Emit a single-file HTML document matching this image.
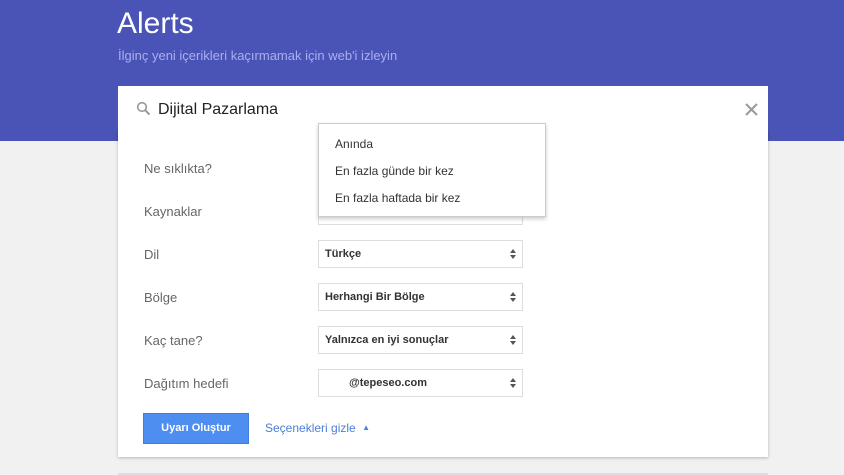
<!DOCTYPE html>
<html><head><meta charset="utf-8"><style>
body{margin:0;width:844px;height:475px;background:#f1f1f1;font-family:"Liberation Sans",Arial,sans-serif;position:relative;overflow:hidden}
.hdr{position:absolute;left:0;top:0;width:844px;height:141px;background:#4a53b6}
.t{position:absolute;left:117px;top:7px;font-size:30px;color:#fff;font-weight:300}
.st{position:absolute;left:118px;top:48px;font-size:13px;color:#a9b0ec}
.sb{position:absolute;left:118px;top:86px;width:650px;height:44px;background:#fff}
.sb .q{position:absolute;left:40px;top:15px;font-size:16px;color:#222}
.card{position:absolute;left:118px;top:130px;width:650px;height:327px;background:#fff;box-shadow:0 1px 3px rgba(0,0,0,.25)}
.lbl{position:absolute;left:144px;font-size:13px;color:#666}
.sel{position:absolute;left:318px;width:205px;height:28px;border:1px solid #ddd;background:#fff;font-size:11px;font-weight:bold;color:#333;box-sizing:border-box}
.sel span{position:absolute;left:6px;top:7px}
.sel i{position:absolute;right:6px;top:8px;width:0;height:0;border-left:3.5px solid transparent;border-right:3.5px solid transparent;border-bottom:4px solid #555}
.sel b{position:absolute;right:6px;top:14px;width:0;height:0;border-left:3.5px solid transparent;border-right:3.5px solid transparent;border-top:4px solid #555}
.dd{position:absolute;left:318px;top:123px;width:228px;height:94px;background:#fff;border:1px solid #ccc;box-shadow:0 2px 4px rgba(0,0,0,.2);box-sizing:border-box}
.dd div{position:absolute;left:16px;font-size:12px;color:#333}
.btn{position:absolute;left:143px;top:413px;width:106px;height:31px;background:#4d8ef0;border:1px solid #3f7ed8;box-sizing:border-box;color:#fff;font-size:11px;font-weight:bold;text-align:center;line-height:29px}
.lnk{position:absolute;left:265px;top:421px;font-size:12px;color:#4a7fd8}
</style></head><body>
<div class="hdr"></div>
<div class="t">Alerts</div>
<div class="st">İlginç yeni içerikleri kaçırmamak için web'i izleyin</div>
<div class="card"></div>
<div class="sb">
<svg style="position:absolute;left:18px;top:15px" width="15" height="15" viewBox="0 0 15 15"><circle cx="6" cy="6" r="4.3" fill="none" stroke="#999" stroke-width="1.6"/><path d="M9.2 9.2L13.5 13.5" stroke="#999" stroke-width="2"/></svg>
<div class="q">Dijital Pazarlama</div>
<svg style="position:absolute;left:627px;top:17px" width="13" height="13" viewBox="0 0 13 13"><path d="M1 1L12 12M12 1L1 12" stroke="#999" stroke-width="2"/></svg>
</div>
<div class="lbl" style="top:161px">Ne sıklıkta?</div>
<div class="lbl" style="top:204px">Kaynaklar</div>
<div class="sel" style="top:197px"></div>
<div class="lbl" style="top:247px">Dil</div>
<div class="sel" style="top:240px"><span>Türkçe</span><i></i><b></b></div>
<div class="lbl" style="top:290px">Bölge</div>
<div class="sel" style="top:283px"><span>Herhangi Bir Bölge</span><i></i><b></b></div>
<div class="lbl" style="top:333px">Kaç tane?</div>
<div class="sel" style="top:326px"><span>Yalnızca en iyi sonuçlar</span><i></i><b></b></div>
<div class="lbl" style="top:376px">Dağıtım hedefi</div>
<div class="sel" style="top:369px"><span style="left:30px">@tepeseo.com</span><i></i><b></b></div>
<div class="dd"><div style="top:13px">Anında</div><div style="top:40px">En fazla günde bir kez</div><div style="top:67px">En fazla haftada bir kez</div></div>
<div class="btn">Uyarı Oluştur</div>
<div class="lnk">Seçenekleri gizle <span style="font-size:8px;position:relative;top:-2px;left:3px">▲</span></div>
<div style="position:absolute;left:118px;top:473px;width:650px;height:2px;background:#ddd"></div>
</body></html>
